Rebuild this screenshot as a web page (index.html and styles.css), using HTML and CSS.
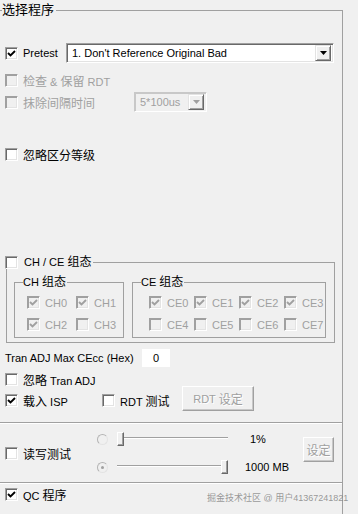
FILE: index.html
```html
<!DOCTYPE html>
<html lang="zh-CN">
<head>
<meta charset="UTF-8">
<meta name="viewport" content="width=device-width, initial-scale=1.0">
<title>选择程序</title>
<link rel="stylesheet" href="styles.css">
</head>

<body>
  <fieldset class="panel">
    <legend class="panel-title">选择程序</legend>

    <div class="row row-pretest">
      <label class="chk w-pretest">
        <span class="cb"><svg viewBox="0 0 11 11"><path d="M2 5l2.5 2.5 4.5-4.5"/></svg></span>
        <span>Pretest</span>
      </label>
      <div class="combo combo-main">
        <span class="combo-text">1. Don't Reference Original Bad</span>
        <span class="combo-btn"><svg viewBox="0 0 7 4"><path d="M0 0h7l-3.5 4z"/></svg></span>
      </div>
    </div>

    <div class="row row-check">
      <label class="chk dis">
        <span class="cb"></span>
        <span><span class="cn">检查</span> &amp; <span class="cn">保留</span> RDT</span>
      </label>
    </div>

    <div class="row row-erase">
      <label class="chk dis w-erase">
        <span class="cb"></span>
        <span class="cn">抹除间隔时间</span>
      </label>
      <div class="combo combo-dis">
        <span class="combo-text">5*100us</span>
        <span class="combo-btn"><svg viewBox="0 0 7 4"><path d="M0 0h7l-3.5 4z"/></svg></span>
      </div>
    </div>

    <div class="row row-level">
      <label class="chk">
        <span class="cb"></span>
        <span class="cn">忽略区分等级</span>
      </label>
    </div>

    <fieldset class="grp">
      <legend class="grp-legend">
        <span class="cb"></span>
        <span>CH / CE <span class="cn">组态</span></span>
      </legend>

      <fieldset class="sub sub-ch">
        <legend class="sub-legend">CH <span class="cn">组态</span></legend>
        <div class="cb-grid ch-grid">
          <label class="chk dis"><span class="cb"><svg viewBox="0 0 11 11"><path d="M2 5l2.5 2.5 4.5-4.5"/></svg></span><span>CH0</span></label>
          <label class="chk dis"><span class="cb"><svg viewBox="0 0 11 11"><path d="M2 5l2.5 2.5 4.5-4.5"/></svg></span><span>CH1</span></label>
          <label class="chk dis"><span class="cb"><svg viewBox="0 0 11 11"><path d="M2 5l2.5 2.5 4.5-4.5"/></svg></span><span>CH2</span></label>
          <label class="chk dis"><span class="cb"></span><span>CH3</span></label>
        </div>
      </fieldset>

      <fieldset class="sub sub-ce">
        <legend class="sub-legend">CE <span class="cn">组态</span></legend>
        <div class="cb-grid ce-grid">
          <label class="chk dis"><span class="cb"><svg viewBox="0 0 11 11"><path d="M2 5l2.5 2.5 4.5-4.5"/></svg></span><span>CE0</span></label>
          <label class="chk dis"><span class="cb"><svg viewBox="0 0 11 11"><path d="M2 5l2.5 2.5 4.5-4.5"/></svg></span><span>CE1</span></label>
          <label class="chk dis"><span class="cb"><svg viewBox="0 0 11 11"><path d="M2 5l2.5 2.5 4.5-4.5"/></svg></span><span>CE2</span></label>
          <label class="chk dis"><span class="cb"><svg viewBox="0 0 11 11"><path d="M2 5l2.5 2.5 4.5-4.5"/></svg></span><span>CE3</span></label>
          <label class="chk dis"><span class="cb"></span><span>CE4</span></label>
          <label class="chk dis"><span class="cb"></span><span>CE5</span></label>
          <label class="chk dis"><span class="cb"></span><span>CE6</span></label>
          <label class="chk dis"><span class="cb"></span><span>CE7</span></label>
        </div>
      </fieldset>
    </fieldset>

    <div class="row row-tran">
      <span class="tran-label">Tran ADJ Max CEcc (Hex)</span>
      <span class="hex">0</span>
    </div>

    <div class="row row-ignore">
      <label class="chk">
        <span class="cb"></span>
        <span><span class="cn">忽略</span> Tran ADJ</span>
      </label>
    </div>

    <div class="row row-isp">
      <label class="chk w-isp">
        <span class="cb"><svg viewBox="0 0 11 11"><path d="M2 5l2.5 2.5 4.5-4.5"/></svg></span>
        <span><span class="cn">载入</span> ISP</span>
      </label>
      <label class="chk w-rdt">
        <span class="cb"></span>
        <span>RDT <span class="cn">测试</span></span>
      </label>
      <span class="btn btn-rdt">RDT <span class="cn">设定</span></span>
    </div>

    <div class="sep sep-top"></div>

    <div class="rw">
      <label class="chk w-rw">
        <span class="cb"></span>
        <span class="cn">读写测试</span>
      </label>

      <div class="sliders">
        <div class="srow">
          <span class="radio"></span>
          <span class="slider"><span class="thumb"></span></span>
          <span class="val val-pct">1%</span>
        </div>
        <div class="srow">
          <span class="radio on"></span>
          <span class="slider slider-end"><span class="thumb"></span></span>
          <span class="val val-mb">1000 MB</span>
        </div>
      </div>

      <span class="btn btn-set cn">设定</span>
    </div>

    <div class="sep"></div>

    <div class="row row-qc">
      <label class="chk">
        <span class="cb"><svg viewBox="0 0 11 11"><path d="M2 5l2.5 2.5 4.5-4.5"/></svg></span>
        <span>QC <span class="cn">程序</span></span>
      </label>
    </div>
  </fieldset>

  <div class="watermark">掘金技术社区 @ 用户41367241821</div>
</body>
</html>
```

FILE: styles.css
```css
body {
  margin: 0;
  background: #f0f0f0;
  font-family: "Liberation Sans", "Noto Sans CJK SC", sans-serif;
  font-size: 11px;
  color: #000;
  width: 358px;
  height: 514px;
  overflow: hidden;
  position: relative;
}

.cn {
  font-size: 12px;
}

/* outer group box, left edge is cut off */
.panel {
  margin: 0;
  padding: 0;
  width: 343px;
  height: 514px;
  box-sizing: border-box;
  border: 1px solid #a0a0a0;
  border-left: 0;
  border-bottom: 0;
  min-inline-size: 0;
}

.panel-title {
  margin-left: 2px;
  padding: 0 2px 0 0;
  font-size: 13px;
  line-height: 20px;
}

.row {
  display: flex;
  align-items: center;
  height: 20px;
  padding-left: 5px;
}

.row-pretest { margin-top: 23px; }
.row-check { margin-top: 7px; }
.row-erase { margin-top: 2px; }
.row-level { margin-top: 32px; }

.chk {
  display: flex;
  align-items: center;
  gap: 5px;
  white-space: nowrap;
}
.chk.dis {
  color: #a0a0a0;
}

.w-pretest { width: 61px; }
.w-erase { width: 129px; }
.w-isp { width: 97px; }
.w-rdt { width: 80px; }
.w-rw { width: 92px; flex: none; }

/* checkbox */
.cb {
  flex: none;
  width: 13px;
  height: 13px;
  box-sizing: border-box;
  border: 1px solid;
  border-color: #a0a0a0 #fff #fff #a0a0a0;
  box-shadow: inset 1px 1px #696969, inset -1px -1px #e3e3e3;
  background: #fff;
  display: flex;
}
.cb svg {
  width: 11px;
  height: 11px;
  fill: none;
  stroke: #000;
  stroke-width: 1.9;
}
.dis .cb {
  background: #f0f0f0;
  border-color: #a0a0a0 #fff #fff #a0a0a0;
  box-shadow: inset 1px 1px #a0a0a0, inset -1px -1px #e3e3e3;
}
.dis .cb svg {
  stroke: #a0a0a0;
}

/* combo box */
.combo {
  display: flex;
  align-items: center;
  height: 20px;
  box-sizing: border-box;
  padding: 2px;
  border: 1px solid;
  border-color: #a0a0a0 #fff #fff #a0a0a0;
  box-shadow: inset 1px 1px #696969, inset -1px -1px #e3e3e3;
  background: #fff;
}
.combo-main {
  width: 268px;
}
.combo-dis {
  width: 73px;
  background: #f0f0f0;
  color: #a0a0a0;
  border-color: #c8c8c8 #fff #fff #c8c8c8;
  box-shadow: inset 1px 1px #c8c8c8;
}
.combo-text {
  flex: 1;
  padding-left: 3px;
  white-space: nowrap;
  overflow: hidden;
}
.combo-btn {
  flex: none;
  width: 16px;
  height: 16px;
  box-sizing: border-box;
  border: 1px solid;
  border-color: #e3e3e3 #696969 #696969 #e3e3e3;
  box-shadow: inset 1px 1px #fff, inset -1px -1px #a0a0a0;
  background: #f0f0f0;
  display: flex;
  align-items: center;
  justify-content: center;
}
.combo-btn svg {
  width: 7px;
  height: 4px;
  fill: #000;
}
.combo-dis .combo-btn svg {
  fill: #a0a0a0;
}

/* CH / CE group */
.grp {
  margin: 91px 0 0 6px;
  padding: 6px 8px 4px 7px;
  width: 329px;
  box-sizing: border-box;
  border: 1px solid #a0a0a0;
  min-inline-size: 0;
  display: flex;
  gap: 8px;
}
.grp-legend {
  margin-left: -9px;
  padding: 0 2px 0 0;
  line-height: 14px;
  display: flex;
  align-items: center;
  gap: 6px;
}

.sub {
  margin: 0;
  padding: 7px 0 6px 8px;
  box-sizing: border-box;
  border: 1px solid #a0a0a0;
  min-inline-size: 0;
}
.sub-ch { width: 110px; }
.sub-ce { width: 194px; }
.sub-legend {
  padding: 0 1px 0 0;
  line-height: 14px;
}

.cb-grid {
  display: grid;
  row-gap: 9px;
}
.ch-grid {
  grid-template-columns: 49px auto;
  margin-left: 4px;
}
.ce-grid {
  grid-template-columns: 45px 45px 45px auto;
  margin-left: 8px;
}
.cb-grid .chk {
  height: 13px;
}

.row-tran {
  margin-top: 6px;
  height: 18px;
}
.tran-label {
  width: 137px;
}
.hex {
  width: 28px;
  height: 18px;
  line-height: 18px;
  background: #fff;
  text-align: center;
}

.row-ignore {
  margin-top: 5px;
  height: 14px;
}
.row-isp {
  height: 25px;
}
.row-isp .chk {
  margin-top: 3px;
}

/* buttons */
.btn {
  flex: none;
  display: flex;
  align-items: center;
  justify-content: center;
  gap: 3px;
  box-sizing: border-box;
  height: 25px;
  border: 1px solid;
  border-color: #fff #a0a0a0 #a0a0a0 #fff;
  box-shadow: inset -1px -1px #c8c8c8;
  background: #f0f0f0;
  color: #a0a0a0;
  text-shadow: 1px 1px #fff;
}
.btn-rdt {
  width: 72px;
}
.btn-set {
  width: 31px;
  align-self: flex-start;
  margin-top: 13px;
}

.sep {
  height: 1px;
  background: #a0a0a0;
  border-bottom: 1px solid #fff;
}
.sep-top {
  margin-top: 11px;
}

/* read / write test */
.rw {
  display: flex;
  align-items: center;
  height: 58px;
  padding-left: 5px;
}
.sliders {
  width: 206px;
  display: flex;
  flex-direction: column;
  gap: 14px;
}
.srow {
  display: flex;
  align-items: center;
  height: 14px;
}
.radio {
  flex: none;
  width: 11px;
  height: 11px;
  box-sizing: border-box;
  border-radius: 50%;
  border: 1px solid;
  border-color: #b4b4b4 #e3e3e3 #e3e3e3 #b4b4b4;
  background: #f0f0f0;
  display: flex;
  align-items: center;
  justify-content: center;
}
.radio.on::after {
  content: "";
  width: 3px;
  height: 3px;
  border-radius: 50%;
  background: #a0a0a0;
}
.slider {
  flex: none;
  width: 111px;
  height: 14px;
  margin-left: 9px;
  display: flex;
  background:
    linear-gradient(#a0a0a0, #a0a0a0) 0 5px / 100% 1px no-repeat,
    linear-gradient(#fff, #fff) 0 6px / 100% 1px no-repeat;
}
.slider-end {
  justify-content: flex-end;
}
.thumb {
  width: 7px;
  height: 14px;
  box-sizing: border-box;
  border: 1px solid;
  border-color: #fff #696969 #696969 #fff;
  box-shadow: inset -1px -1px #a0a0a0;
  background: #f0f0f0;
}
.val {
  white-space: nowrap;
}
.val-pct { margin-left: 22px; }
.val-mb { margin-left: 17px; }

.row-qc {
  height: 20px;
}

.watermark {
  position: absolute;
  left: 207px;
  top: 492px;
  font-size: 9px;
  line-height: 12px;
  color: rgba(120, 120, 120, 0.75);
  white-space: nowrap;
}
```
